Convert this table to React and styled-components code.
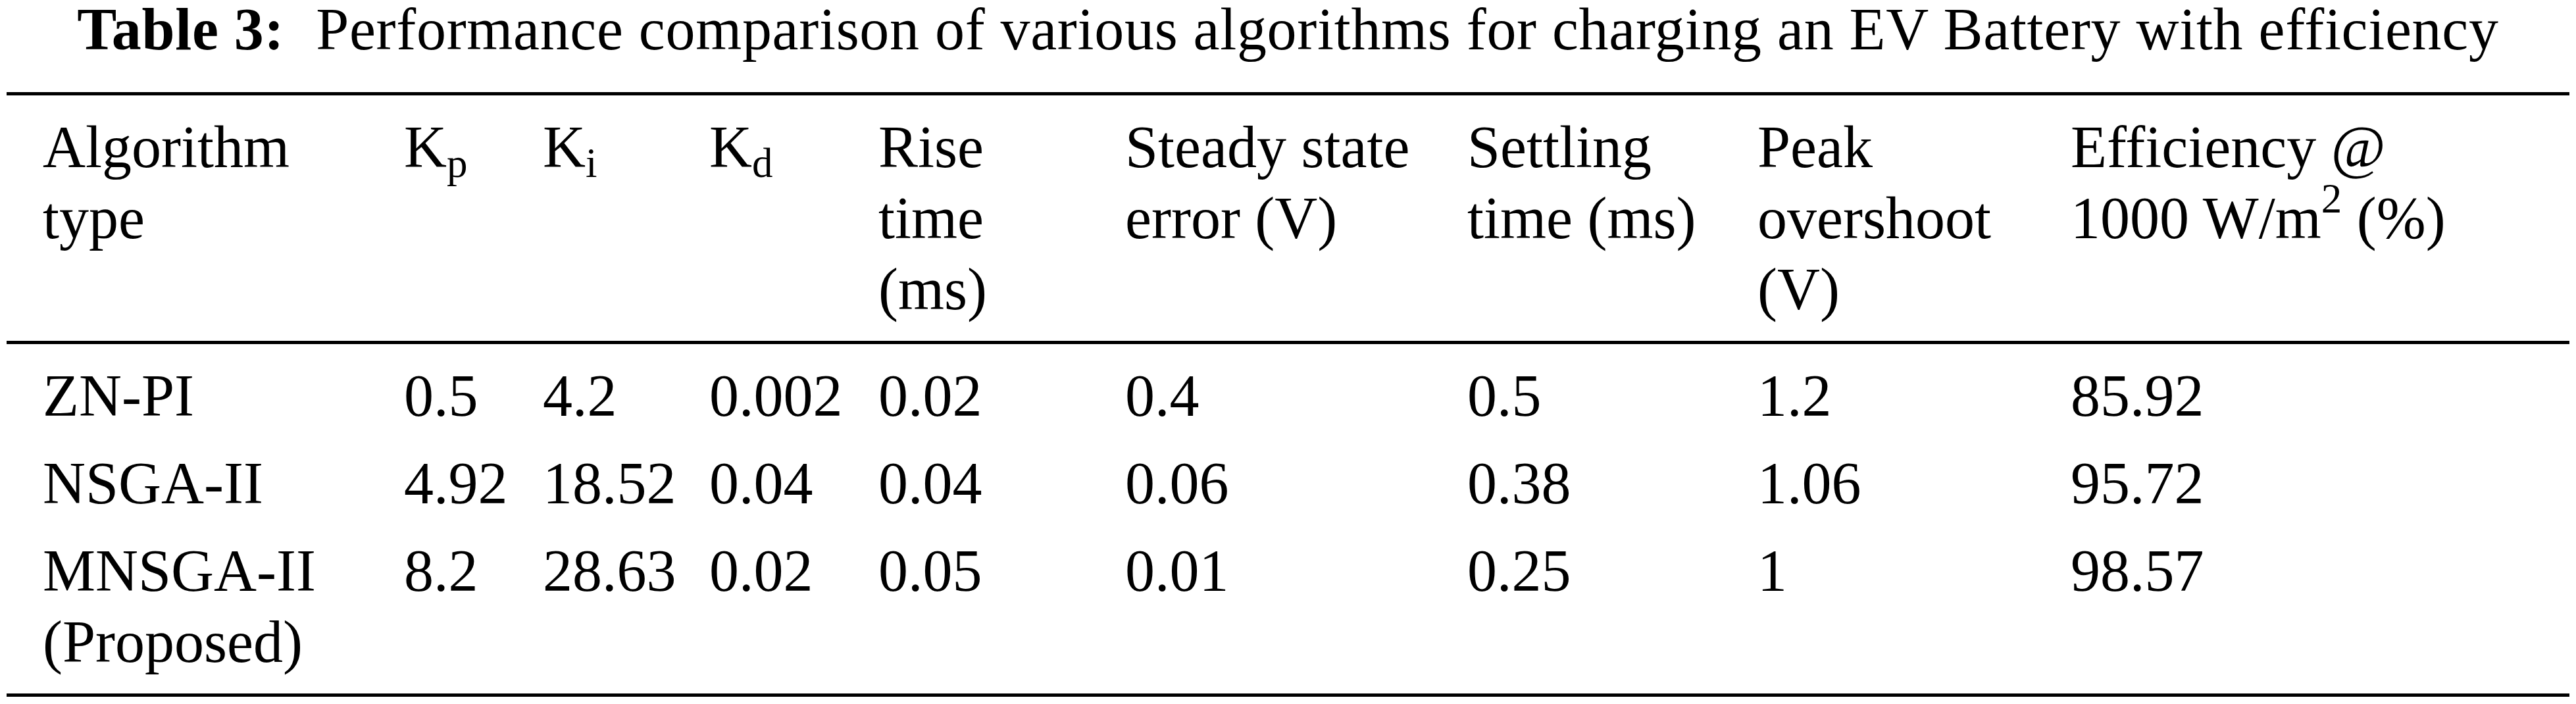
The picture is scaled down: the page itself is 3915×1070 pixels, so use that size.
import React from "react";
import styled, { createGlobalStyle } from "styled-components";

const Global = createGlobalStyle`
  html, body {
    margin: 0;
    padding: 0;
    background: #ffffff;
  }
  body {
    font-family: "Liberation Serif", "Times New Roman", serif;
    color: #000000;
  }
`;

const Page = styled.div`
  width: 3915px;
  min-height: 1070px;
  background: #ffffff;
  font-family: "Liberation Serif", "Times New Roman", serif;
  font-size: 90px;
  color: #000;
`;

const Caption = styled.div`
  text-align: center;
  line-height: 90px;
  margin-bottom: 50px;
  white-space: nowrap;
  letter-spacing: 0.7px;
`;

const CaptionLabel = styled.span`
  font-weight: bold;
  margin-right: 48px;
`;

const Table = styled.div`
  margin: 0 10px;
  width: 3895px;
`;

const Section = styled.div`
  border-top: ${(p) => (p.$top ? "5px solid #000" : "none")};
  border-bottom: 5px solid #000;
  padding-bottom: 24px;
`;

const Row = styled.div`
  display: grid;
  grid-template-columns: 604px 211px 253px 257px 375px 520px 441px 476px 1fr;
  padding-top: 25px;
  line-height: 108px;
`;

const Cell = styled.div`
  padding-left: ${(p) => (p.$first ? "55px" : "0")};
  white-space: nowrap;
`;

const Sub = styled.span`
  font-size: 63px;
  line-height: 0;
  vertical-align: -15px;
`;

const Sup = styled.span`
  font-size: 63px;
  line-height: 0;
  vertical-align: 39px;
`;

const Lines = ({ items }) => (
  <>
    {items.map((t, i) => (
      <div key={i}>{t}</div>
    ))}
  </>
);

const header = [
  ["Algorithm", "type"],
  [<>K<Sub>p</Sub></>],
  [<>K<Sub>i</Sub></>],
  [<>K<Sub>d</Sub></>],
  ["Rise", "time", "(ms)"],
  ["Steady state", "error (V)"],
  ["Settling", "time (ms)"],
  ["Peak", "overshoot", "(V)"],
  ["Efficiency @", <>1000 W/m<Sup>2</Sup> (%)</>],
];

const rows = [
  [["ZN-PI"], "0.5", "4.2", "0.002", "0.02", "0.4", "0.5", "1.2", "85.92"],
  [["NSGA-II"], "4.92", "18.52", "0.04", "0.04", "0.06", "0.38", "1.06", "95.72"],
  [["MNSGA-II", "(Proposed)"], "8.2", "28.63", "0.02", "0.05", "0.01", "0.25", "1", "98.57"],
];

export default function App() {
  return (
    <Page>
      <Global />
      <Caption>
        <CaptionLabel>Table 3:</CaptionLabel>
        Performance comparison of various algorithms for charging an EV Battery with efficiency
      </Caption>
      <Table>
        <Section $top>
          <Row>
            {header.map((h, i) => (
              <Cell key={i} $first={i === 0}>
                <Lines items={h} />
              </Cell>
            ))}
          </Row>
        </Section>
        <Section>
          {rows.map((r, ri) => (
            <Row key={ri}>
              {r.map((c, ci) => (
                <Cell key={ci} $first={ci === 0}>
                  {Array.isArray(c) ? <Lines items={c} /> : c}
                </Cell>
              ))}
            </Row>
          ))}
        </Section>
      </Table>
    </Page>
  );
}
